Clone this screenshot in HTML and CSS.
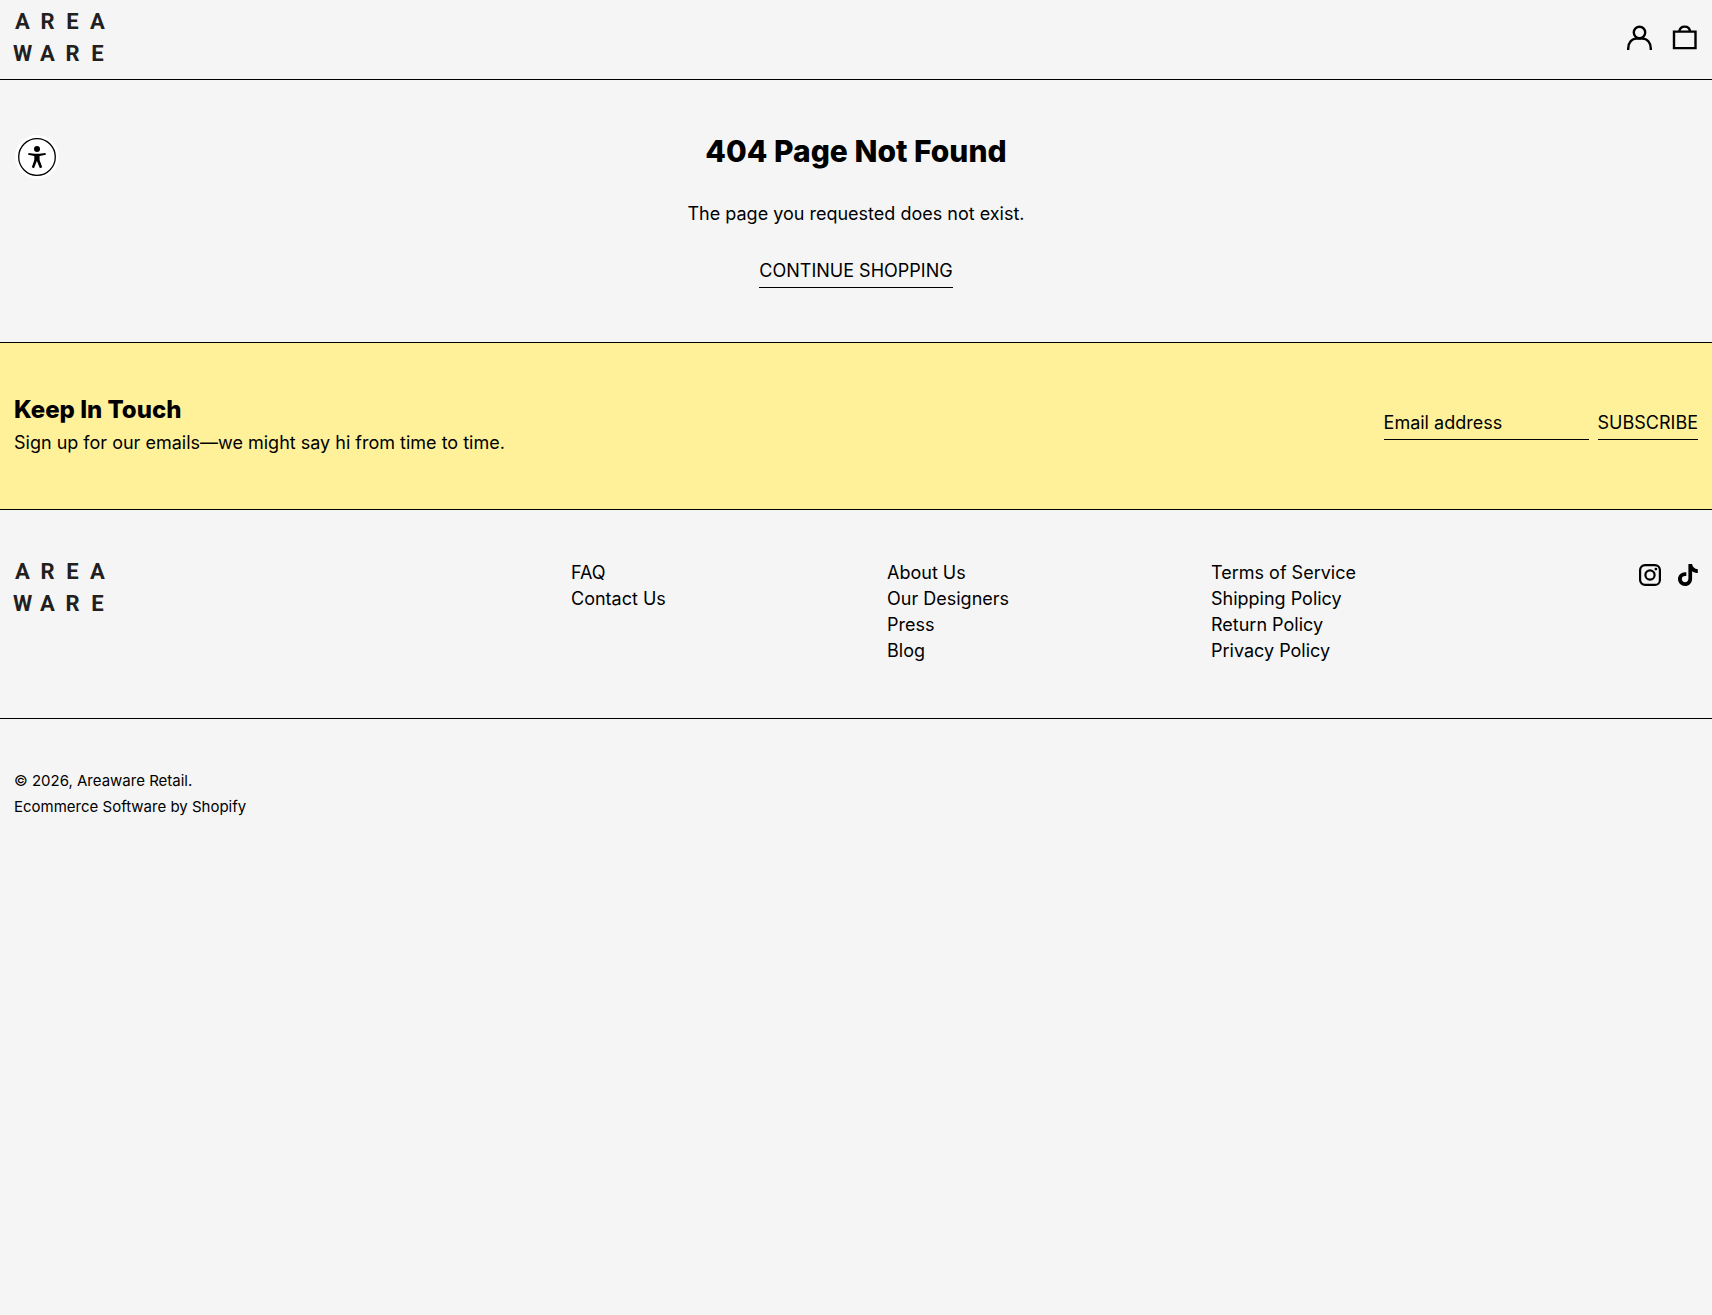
FILE: index.html
```html
<!DOCTYPE html>
<html lang="en">
<head>
<meta charset="utf-8">
<meta name="viewport" content="width=device-width, initial-scale=1">
<title>404 Not Found – Areaware</title>
<link rel="stylesheet" href="styles.css">
</head>
<body>
<header class="header">
  <a class="logo" href="#" aria-label="Areaware"><span>A</span><span>R</span><span>E</span><span>A</span><span>W</span><span>A</span><span>R</span><span>E</span></a>
  <div class="header-actions">
    <a class="icon-link" href="#" aria-label="Account"><svg width="26" height="26" viewBox="0 0 26 26" fill="none" stroke="#000" stroke-width="2.4"><circle cx="12.500" cy="7.500" r="5.700"/><path d="M1.200 25v-1.500C1.200 17.500 5 13.600 9.500 13.600h6c4.500 0 8.300 3.900 8.300 9.900V25"/></svg></a>
    <a class="icon-link" href="#" aria-label="Cart"><svg width="26" height="26" viewBox="0 0 26 26" fill="none" stroke="#000" stroke-width="2.400"><path d="M2 6.600h21.500v16.500H2z"/><path d="M7.300 6.500C7.700 3.600 9.700 1.600 12.700 1.600s5 2 5.400 4.900"/></svg></a>
  </div>
</header>

<button class="accessibility" type="button" aria-label="Accessibility options"><svg width="44" height="44" viewBox="0 0 44 44"><circle cx="22" cy="22" r="22" fill="#fff"/><circle cx="22" cy="22" r="18.300" fill="#fff" stroke="#000" stroke-width="1.300"/><circle cx="22" cy="14" r="3"/><path d="M13.500 17.900c5 1.100 12 1.100 17 0l.4 1.900-6.300 1.100v4l2.600 7.400-2.300.9-2.900-7h-.3l-2.700 7-2.200-.9 2.500-7.400v-4l-6.200-1.100z"/></svg></button>

<main class="not-found">
  <h1>404 Page Not Found</h1>
  <p>The page you requested does not exist.</p>
  <a class="underlined" href="#">CONTINUE SHOPPING</a>
</main>

<section class="newsletter">
  <div>
    <h2>Keep In Touch</h2>
    <p>Sign up for our emails—we might say hi from time to time.</p>
  </div>
  <form class="signup">
    <input class="underlined email" type="email" placeholder="Email address" aria-label="Email address">
    <button class="underlined" type="button">SUBSCRIBE</button>
  </form>
</section>

<footer>
  <div class="footer-main">
    <a class="logo" href="#" aria-label="Areaware"><span>A</span><span>R</span><span>E</span><span>A</span><span>W</span><span>A</span><span>R</span><span>E</span></a>
    <ul class="links">
      <li><a href="#">FAQ</a></li>
      <li><a href="#">Contact Us</a></li>
    </ul>
    <ul class="links">
      <li><a href="#">About Us</a></li>
      <li><a href="#">Our Designers</a></li>
      <li><a href="#">Press</a></li>
      <li><a href="#">Blog</a></li>
    </ul>
    <ul class="links">
      <li><a href="#">Terms of Service</a></li>
      <li><a href="#">Shipping Policy</a></li>
      <li><a href="#">Return Policy</a></li>
      <li><a href="#">Privacy Policy</a></li>
    </ul>
    <div class="social">
      <a class="icon-link" href="#" aria-label="Instagram"><svg width="22" height="22" viewBox="0 0 22 22" fill="none" stroke="#000" stroke-width="2.200"><rect x="1.100" y="1.100" width="19.800" height="19.800" rx="5"/><circle cx="11" cy="11" r="4.600"/><circle cx="16.900" cy="5.100" r="1.400" fill="#000" stroke="none"/></svg></a>
      <a class="icon-link" href="#" aria-label="TikTok"><svg width="20" height="22" viewBox="0 0 20 22"><path d="M10.400 0h3.700c.3 2.900 2.400 4.900 5.700 5.200v3.900c-2.200 0-4-.6-5.700-1.800v7.400c0 4.500-3.200 7.300-7 7.300C3.200 22 0 19.100 0 15.100c0-4.400 3.700-7.500 8.300-6.900v3.900c-2.500-.7-4.500.7-4.500 2.900 0 1.900 1.400 3.200 3.200 3.200 2 0 3.400-1.300 3.400-3.700z"/></svg></a>
    </div>
  </div>
  <div class="legal">
    <p>© 2026, Areaware Retail.</p>
    <p><a href="#">Ecommerce Software by Shopify</a></p>
  </div>
</footer>
</body>
</html>
```
FILE: styles.css
```css
* { box-sizing: border-box; margin: 0; padding: 0; }

body {
  background: #f5f5f5;
  color: #000;
  font: 400 18px/26px Inter, "Liberation Sans", sans-serif;
}

a { color: inherit; text-decoration: none; }
ul { list-style: none; }
svg { display: block; }
button, input { font: inherit; color: inherit; background: none; border: 0; border-radius: 0; }

h1, h2 { font-weight: 800; }
h1 { font-size: 30px; line-height: 34px; }
h2 { font-size: 24px; line-height: 32px; }

.header {
  display: flex;
  justify-content: space-between;
  align-items: flex-start;
  padding: 10px 14px 13px;
  border-bottom: 1px solid #000;
}

.logo {
  display: grid;
  grid-template-columns: repeat(4, 25px);
  row-gap: 8px;
  justify-content: start;
  margin-left: -4px;
  color: #231f20;
  font: 700 22px/24px Roboto, "Liberation Sans", sans-serif;
  text-align: center;
}

.header-actions { display: flex; gap: 19px; padding-top: 15px; }
.icon-link { display: block; }

.accessibility {
  position: absolute;
  top: 135px;
  left: 15px;
  cursor: pointer;
}

.not-found {
  display: flex;
  flex-direction: column;
  align-items: center;
  padding: 54px 14px;
}
.not-found p { margin: 33px 0 31px; }

.underlined {
  display: block;
  padding-bottom: 3px;
  border-bottom: 1px solid #000;
}

.newsletter {
  display: flex;
  justify-content: space-between;
  align-items: center;
  padding: 51px 14px 53px;
  background: #fff199;
  border: solid #000;
  border-width: 1px 0;
}
.newsletter h2 { margin-bottom: 4px; }

.signup { display: flex; gap: 9px; }
.email { width: 205px; outline: 0; }
.email::placeholder { color: #000; opacity: 1; }

.footer-main {
  display: grid;
  grid-template-columns: 557fr 316fr 324fr 427fr 60px;
  align-items: start;
  padding: 50px 14px 54px;
  border-bottom: 1px solid #000;
}

.social { display: flex; justify-content: flex-end; gap: 17px; padding-top: 4px; }

.legal { padding: 49px 14px; font-size: 15px; }
```
